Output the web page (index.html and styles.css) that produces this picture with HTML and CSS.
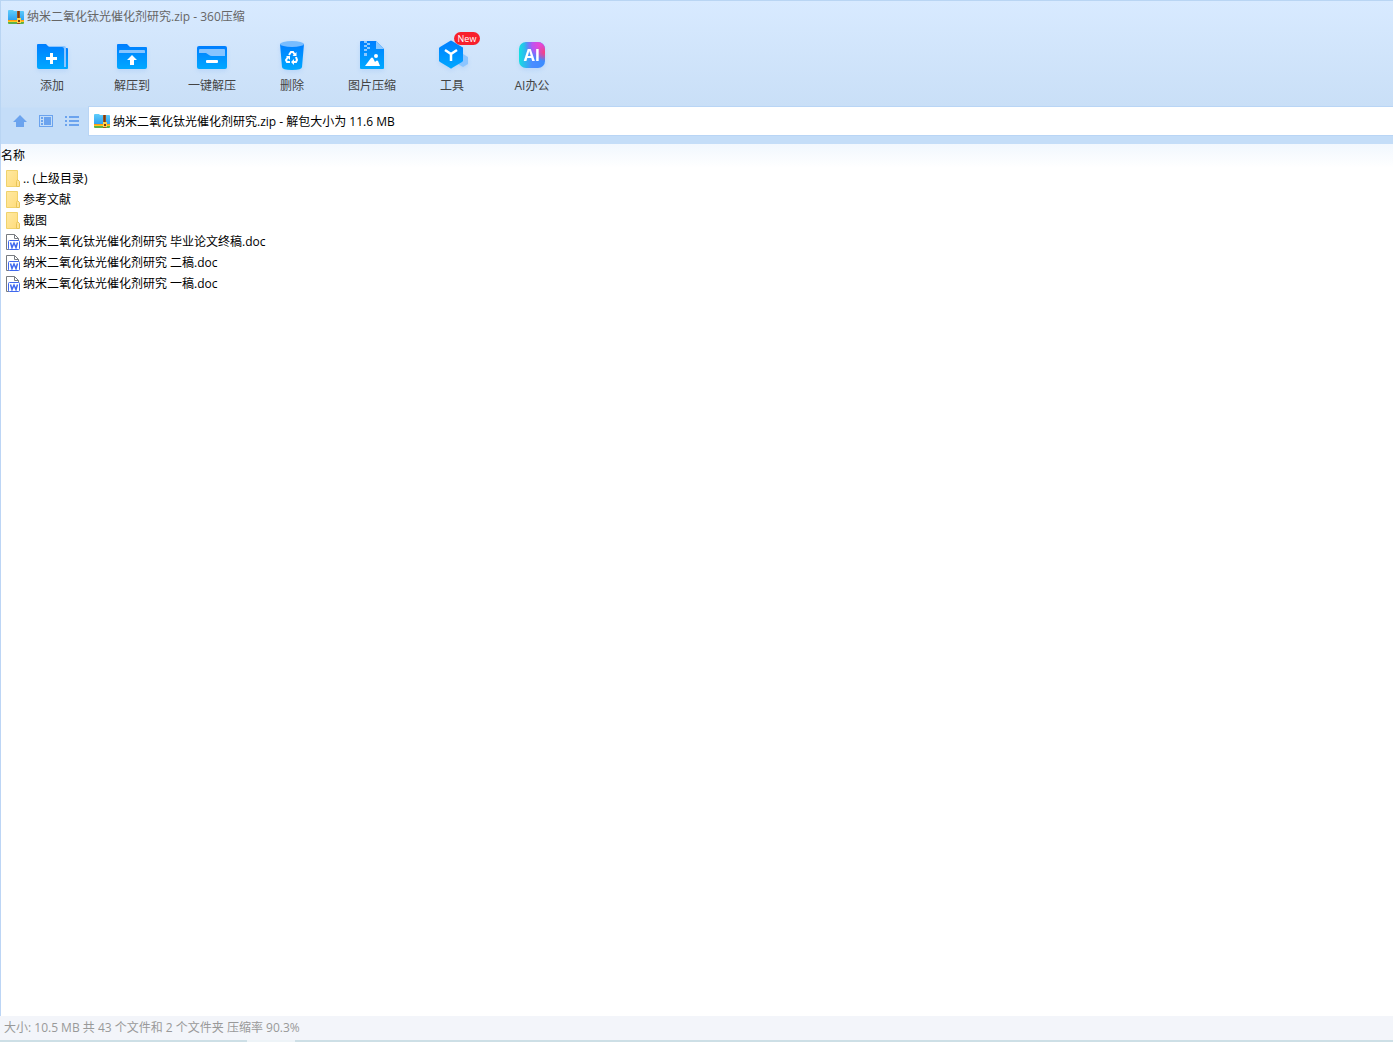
FILE: index.html
```
<!doctype html>
<html lang="zh-CN">
    <head>
        <meta charset="utf-8">
        <title>纳米二氧化钛光催化剂研究.zip - 360压缩</title>
        <link rel="stylesheet" href="styles.css">
    </head>
    <body>
        <!-- shared symbols -->
        <svg class="defs" width="0" height="0" aria-hidden="true">
            <defs>
                <linearGradient id="blue" x1="0" y1="0" x2="0" y2="1">
                    <stop offset="0" stop-color="#007eff"/>
                    <stop offset="1" stop-color="#00a8ff"/>
                </linearGradient>
                <linearGradient id="sky" x1="0" y1="0" x2="0" y2="1">
                    <stop offset="0" stop-color="#5fcdfb"/>
                    <stop offset="1" stop-color="#2a9df0"/>
                </linearGradient>
                <linearGradient id="yellow" x1="0" y1="0" x2="1" y2="1">
                    <stop offset="0" stop-color="#ffe9a2"/>
                    <stop offset="1" stop-color="#ffdc7c"/>
                </linearGradient>
                <linearGradient id="ai" x1="0" y1="0" x2="1" y2="0">
                    <stop offset="0" stop-color="#14e0e0"/>
                    <stop offset="0.5" stop-color="#4a8cff"/>
                    <stop offset="1" stop-color="#3a8cff"/>
                </linearGradient>
                <radialGradient id="aiPink" cx="0.8" cy="0.1" r="0.6">
                    <stop offset="0" stop-color="#f044d0"/>
                    <stop offset="0.5" stop-color="#c550f0" stop-opacity="0.9"/>
                    <stop offset="1" stop-color="#8060ff" stop-opacity="0"/>
                </radialGradient>
                <radialGradient id="aiRed" cx="1" cy="0.4" r="0.35">
                    <stop offset="0" stop-color="#ff3f78"/>
                    <stop offset="1" stop-color="#ff3f78" stop-opacity="0"/>
                </radialGradient>
            </defs>
            <symbol id="zip" viewBox="0 0 16 14">
                <path fill="url(#sky)" d="M0 1q0-1 1-1h4l1 1h9q1 0 1 1v9H0z"/>
                <path fill="#ff9a10" d="M0 10h16v1H0z"/>
                <path fill="#ffc81f" d="M0 11h16v1H0z"/>
                <path fill="#5cb048" d="M0 12h16v1q0 1-1 1H1q-1 0-1-1z"/>
                <path fill="#9c5222" d="M9 1h3v13H9z"/>
                <path fill="#7a3c12" d="M10 1h1v7h-1z"/>
                <path fill="#ffd24a" d="M9 8h4v5H9z"/>
                <path fill="#7a3c12" d="M10 10h2v2h-2z"/>
            </symbol>
            <symbol id="folder" viewBox="0 0 14 17">
                <path fill="url(#yellow)" stroke="#f0d26c" d="M.5.5h11v16H.5z"/>
                <path fill="#ffe396" stroke="#e8c556" d="M11.500 9.500l2 2v5h-3v-5z"/>
            </symbol>
            <symbol id="doc" viewBox="0 0 14 16">
                <path fill="#fff" stroke="#777b80" d="M3 15.500H.5V.5h8l4 4v3H3zM8.500.5v4h4"/>
                <rect fill="#fff" stroke="#3f68ee" x="2.500" y="6.500" width="11" height="9" rx="1"/>
                <path fill="none" stroke="#3f68ee" stroke-width="1.500" d="M4.500 8.500l1.500 5 2-4.500 2 4.500 1.500-5"/>
            </symbol>
        </svg>

        <header class="top">
            <div class="title">
                <svg class="icon-zip"><use href="#zip"/></svg>
                <h1>纳米二氧化钛光催化剂研究.zip - 360压缩</h1>
            </div>

            <div class="toolbar">
                <button type="button">
                    <svg viewBox="0 0 32 32">
                        <path fill="url(#blue)" d="M27 8h4q1 0 1 1v19q0 1-1 1h-4z"/>
                        <path fill="#8cc5ff" d="M12 6h16q2 0 2 2v19h-3V10H12z"/>
                        <path fill="url(#blue)" d="M2 4h8l3 3h13q2 0 2 2v20H3q-2 0-2-2V5q0-1 1-1z"/>
                        <path fill="#fff" d="M14 13h3v4h4v3h-4v4h-3v-4h-4v-3h4z"/>
                    </svg>
                    添加
                </button>
                <button type="button">
                    <svg viewBox="0 0 32 32">
                        <path fill="url(#blue)" d="M2 4h9l3 3h16q1 0 1 1v19q0 2-2 2H3q-2 0-2-2V5q0-1 1-1z"/>
                        <path fill="#86c4ff" d="M3 11q0-1 1-1h24q1 0 1 1v2H3z"/>
                        <path fill="#fff" d="M16 15l5 5h-3v5h-4v-5h-3z"/>
                    </svg>
                    解压到
                </button>
                <button type="button">
                    <svg viewBox="0 0 32 32">
                        <rect fill="url(#blue)" x="1" y="6" width="30" height="23" rx="2"/>
                        <path fill="#86c4ff" d="M3 10q0-1 1-1h24q1 0 1 1v6H16q-2 0-3-1l-3-2H3z"/>
                        <rect fill="#fff" x="10" y="20" width="12" height="3" rx="1"/>
                    </svg>
                    一键解压
                </button>
                <button type="button">
                    <svg viewBox="0 0 32 32">
                        <path fill="url(#blue)" d="M4 4h24l-2 23q0 3-10 3T6 27z"/>
                        <ellipse fill="#78bcff" cx="16" cy="4" rx="12" ry="3"/>
                        <g fill="none" stroke="#fff" stroke-width="2">
                            <path d="M13 15l2-3h2l2 3"/>
                            <path d="M20 17l1 3-1 2h-3"/>
                            <path d="M14 22h-3l-1-2 2-3"/>
                        </g>
                        <path fill="#fff" d="M20.500 12v4h-4zM18 19v6l-3-3zM10 16h4v4z"/>
                    </svg>
                    删除
                </button>
                <button type="button">
                    <svg viewBox="0 0 32 32">
                        <path fill="url(#blue)" d="M5 1h15l8 8v19q0 1-1 1H5q-1 0-1-1V2q0-1 1-1z"/>
                        <path fill="#8cc8ff" d="M20 1l8 8h-8z"/>
                        <path fill="#8cc8ff" d="M8 1h3v2H8zM11 3h3v2h-3zM8 5h3v2H8zM11 7h3v2h-3zM8 9h3v2H8zM8 13h3v3H8z"/>
                        <circle fill="#fff" cx="20" cy="16" r="2"/>
                        <path fill="#fff" d="M9 26l6-8q1-1 2 0l2 4 1-1q1-1 2 0l2 5z"/>
                    </svg>
                    图片压缩
                </button>
                <button type="button">
                    <svg viewBox="0 0 32 32">
                        <path fill="#8cc5ff" d="M27 14l5 3v7l-5 3-5-3v-7z"/>
                        <path fill="url(#blue)" d="M14 1q1-1 2 0l10 6q1 0 1 1v13l-1 1-10 6q-1 1-2 0L4 22l-1-1V8l1-1z"/>
                        <path fill="none" stroke="#fff" stroke-width="2.500" d="M9 10l6 4 6-4M15 14v7"/>
                    </svg>
                    工具
                    <span class="badge">New</span>
                </button>
                <button type="button">
                    <svg viewBox="0 0 32 32">
                        <rect fill="url(#ai)" x="3" y="2" width="26" height="26" rx="7"/>
                        <rect fill="url(#aiPink)" x="3" y="2" width="26" height="26" rx="7"/>
                        <rect fill="url(#aiRed)" x="3" y="2" width="26" height="26" rx="7"/>
                        <text class="ai-text" x="16" y="21" text-anchor="middle">AI</text>
                    </svg>
                    AI办公
                </button>
            </div>

            <div class="address">
                <nav>
                    <button type="button" aria-label="上级目录">
                        <svg viewBox="0 0 16 16"><path d="M8 2l7 7h-3v5H4V9H1z"/></svg>
                    </button>
                    <button type="button" aria-label="预览">
                        <svg viewBox="0 0 16 16">
                            <path fill-rule="evenodd" d="M1 2h14v12H1zM2 3v10h12V3z"/>
                            <path d="M3 4h2v2H3zM3 7h2v2H3zM3 10h2v2H3zM6 4h7v8H6z"/>
                        </svg>
                    </button>
                    <button type="button" aria-label="列表">
                        <svg viewBox="0 0 16 16"><path d="M1 3h2v2H1zM5 3h10v2H5zM1 7h2v2H1zM5 7h10v2H5zM1 11h2v2H1zM5 11h10v2H5z"/></svg>
                    </button>
                </nav>
                <label class="path">
                    <svg class="icon-zip"><use href="#zip"/></svg>
                    <input type="text" aria-label="地址" value="纳米二氧化钛光催化剂研究.zip - 解包大小为 11.6 MB">
                </label>
            </div>
        </header>

        <main>
            <table>
                <thead>
                    <tr><th scope="col">名称</th></tr>
                </thead>
                <tbody>
                    <tr><td><div class="file"><svg class="folder"><use href="#folder"/></svg>.. (上级目录)</div></td></tr>
                    <tr><td><div class="file"><svg class="folder"><use href="#folder"/></svg>参考文献</div></td></tr>
                    <tr><td><div class="file"><svg class="folder"><use href="#folder"/></svg>截图</div></td></tr>
                    <tr><td><div class="file"><svg class="doc"><use href="#doc"/></svg>纳米二氧化钛光催化剂研究 毕业论文终稿.doc</div></td></tr>
                    <tr><td><div class="file"><svg class="doc"><use href="#doc"/></svg>纳米二氧化钛光催化剂研究 二稿.doc</div></td></tr>
                    <tr><td><div class="file"><svg class="doc"><use href="#doc"/></svg>纳米二氧化钛光催化剂研究 一稿.doc</div></td></tr>
                </tbody>
            </table>
        </main>

        <footer>大小: 10.5 MB 共 43 个文件和 2 个文件夹 压缩率 90.3%</footer>
        <div class="edge"></div>
    </body>
</html>
```
FILE: styles.css
```
* {
    box-sizing: border-box;
}

body {
    display: flex;
    flex-direction: column;
    min-height: 100vh;
    margin: 0;
    background: #fff;
    color: #000;
    font: 12px/16px "Open Sans", "Noto Sans CJK SC", sans-serif;
}

button, input {
    padding: 0;
    border: 0;
    background: none;
    color: inherit;
    font: inherit;
}

.defs {
    position: absolute;
}

/* title, toolbar and address bar */
.top {
    border-top: 1px solid #b9d5f3;
    border-left: 1px solid #b9d5f3;
    background: linear-gradient(#d8eaff, #c9dff7 106px, #c4ddf8 107px);
}

.title {
    display: flex;
    align-items: center;
    gap: 3px;
    height: 31px;
    padding-left: 7px;
    color: #666;
}

h1 {
    margin: 0;
    font-size: 12px;
    font-weight: normal;
}

.icon-zip {
    flex: none;
    width: 16px;
    height: 14px;
}

.toolbar {
    display: flex;
    height: 74px;
    padding: 8px 0 0 11px;
}

.toolbar button {
    position: relative;
    display: flex;
    flex-direction: column;
    align-items: center;
    gap: 6px;
    width: 80px;
    height: 56px;
    color: #444;
}

.toolbar svg {
    flex: none;
    width: 32px;
    height: 32px;
    filter: drop-shadow(0 2px 2px rgba(60, 140, 240, 0.15));
}

.ai-text {
    fill: #fff;
    font: bold 16px "Open Sans", sans-serif;
}

.badge {
    position: absolute;
    top: -8px;
    left: 42px;
    width: 26px;
    height: 13px;
    border-radius: 7px;
    background: #f8202c;
    color: #fff;
    font-size: 9px;
    line-height: 13px;
    text-align: center;
}

.address {
    display: flex;
    height: 38px;
    padding-bottom: 8px;
}

.address nav {
    display: flex;
    align-items: center;
    gap: 10px;
    padding: 0 8px 0 11px;
}

.address nav svg {
    display: block;
    width: 16px;
    height: 16px;
    fill: #6ba3ee;
}

.path {
    display: flex;
    flex: 1;
    align-items: center;
    gap: 3px;
    padding-left: 5px;
    border: 1px solid #b9d5f5;
    border-right: 0;
    background: #fff;
}

.path input {
    flex: 1;
    padding-top: 2px;
    outline: 0;
}

/* file list */
main {
    flex: 1;
    border-left: 1px solid #bcd5f5;
}

table {
    width: 100%;
    border-collapse: collapse;
}

th, td {
    padding: 0;
    text-align: left;
    font-weight: normal;
}

th {
    height: 24px;
    background: linear-gradient(#f1f7fe, #fff);
}

.file {
    display: flex;
    align-items: center;
    gap: 3px;
    height: 21px;
    padding-left: 5px;
}

.folder {
    width: 14px;
    height: 17px;
}

.doc {
    width: 14px;
    height: 16px;
}

/* status bar */
footer {
    height: 24px;
    padding: 4px;
    background: #f3f5fa;
    color: #999;
}

.edge {
    height: 2px;
    background: linear-gradient(to right, #cddfe6 247px, #eef4f8 247px, #eef4f8 295px, #cddfe6 295px);
}
```
